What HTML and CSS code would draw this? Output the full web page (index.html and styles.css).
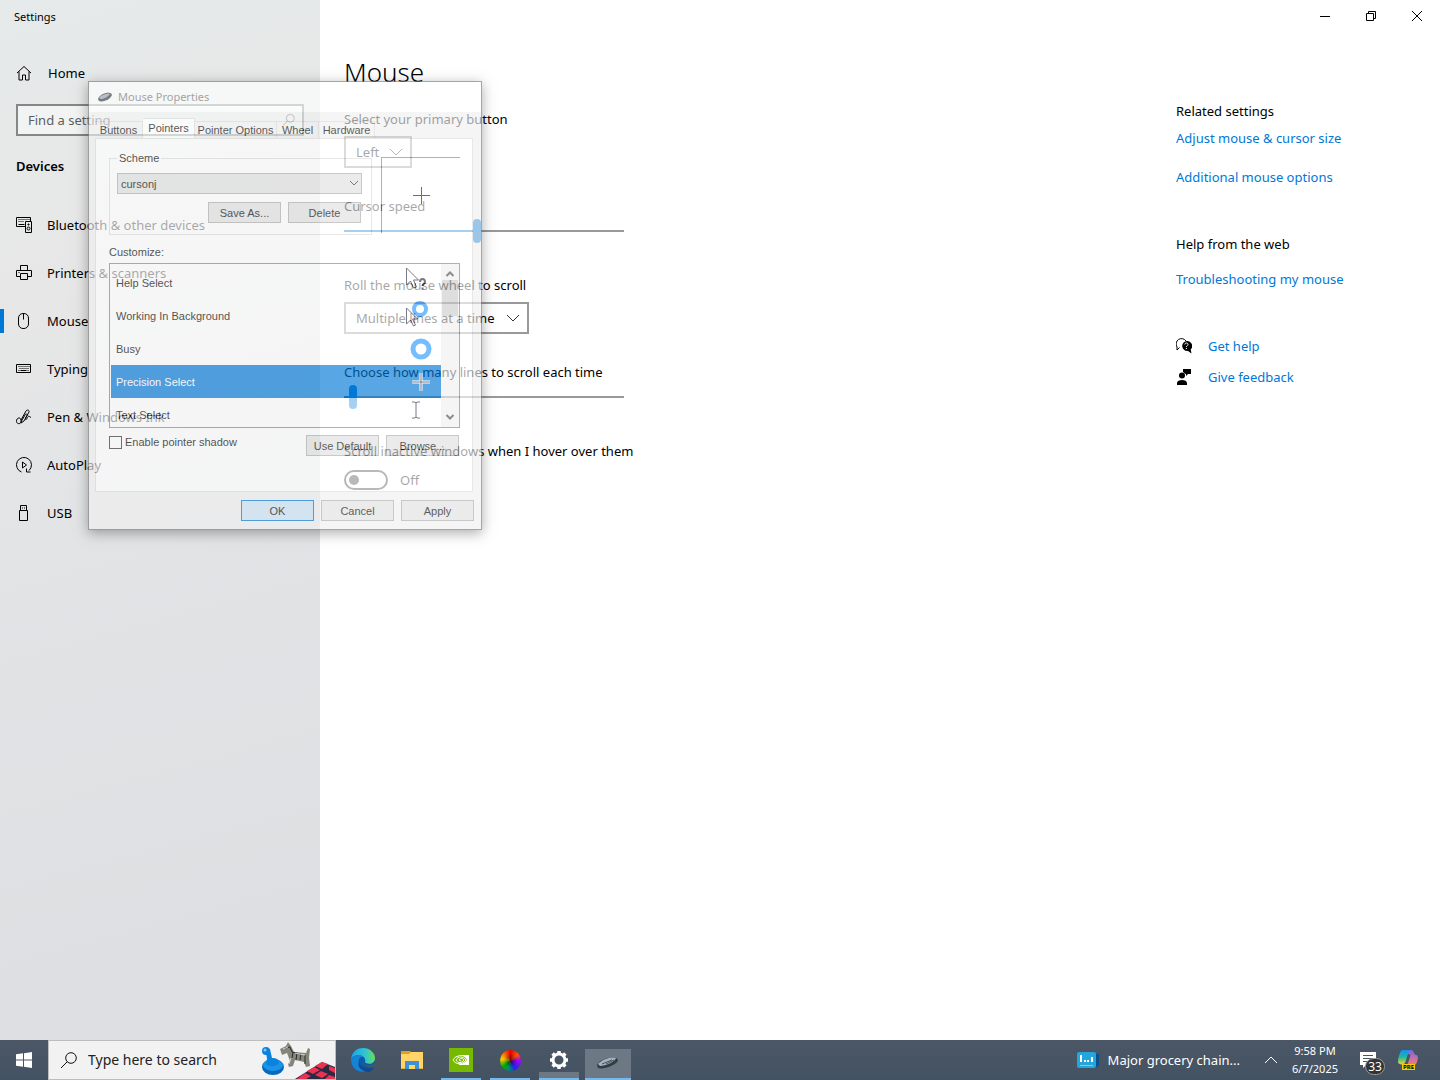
FILE: index.html
```html
<!DOCTYPE html>
<html lang="en">
<head>
    <meta charset="UTF-8">
    <meta name="viewport" content="width=device-width, initial-scale=1.0">
    <title>Settings</title>
    <link rel="stylesheet" href="styles.css">
</head>
<body>
    <div class="settings">
        <nav class="sidebar">
            <div class="app-title">Settings</div>
            <a class="nav-item home" href="#">
                <svg class="icon" viewBox="0 0 16 16"><path d="M1 8l7-6.5L15 8M3 6.500V15h3.500v-5h3v5H13V6.500"/></svg>
                Home
            </a>
            <div class="find">
                <input type="text" placeholder="Find a setting" aria-label="Find a setting">
                <svg class="icon" viewBox="0 0 16 16"><circle cx="9.500" cy="6" r="4.500"/><path d="M6.300 9.300L1 14.500"/></svg>
            </div>
            <h2>Devices</h2>
            <ul class="nav-list">
                <li><a class="nav-item" href="#">
                    <svg class="icon" viewBox="0 0 16 16"><path d="M9 9.500H.5v-9h14v4M2.500 2.500h1m1 0h1m1 0h1m1 0h1m1 0h1m1 0h1M2.500 4.500h1m1 0h1m1 0h1M2.500 7.500h6M9.500 4.500h6v11h-6z"/><circle cx="12.500" cy="11.500" r="1.500"/><path d="M12 7h1v1h-1z"/></svg>
                    Bluetooth &amp; other devices
                </a></li>
                <li><a class="nav-item" href="#">
                    <svg class="icon" viewBox="0 0 16 16"><path d="M4.500 6V.5h7V6M4 11.500H.5v-6h15v6H12M4.500 8.500h7v6h-7zM2.500 7.500h1"/></svg>
                    Printers &amp; scanners
                </a></li>
                <li><a class="nav-item active" href="#">
                    <svg class="icon" viewBox="0 0 16 16"><rect x="2.500" y=".5" width="10" height="15" rx="4.500"/><path d="M7.500 1v5.500"/></svg>
                    Mouse
                </a></li>
                <li><a class="nav-item" href="#">
                    <svg class="icon" viewBox="0 0 16 16"><path d="M.5 3.500h14v8H.5zM2.500 5.500h1m1 0h1m1 0h1m1 0h1m1 0h1m1 0h1M3.500 7.500h1m1 0h1m1 0h1m1 0h1m1 0h1M2.500 9.500h1m1 0h6m1 0h1"/></svg>
                    Typing
                </a></li>
                <li><a class="nav-item" href="#">
                    <svg class="icon" viewBox="0 0 16 16"><path d="M5 11L10 2c1-1.800 3.800-.8 3 1L8 12l-3 2zM5 11c-1-4-5-1.500-4.500 1.500.5 3 4.500 3 5-.5L9 6c1-2 2.500-1 2 .5L9.500 9c-.5 2 1 2 1.500.5s1.500-3 2.500-2l1.500 1"/></svg>
                    Pen &amp; Windows Ink
                </a></li>
                <li><a class="nav-item" href="#">
                    <svg class="icon" viewBox="0 0 16 16"><path d="M5.500 15A7.500 7.500 0 1 1 13 13.500M10.500 11.500v3.500h4M6.500 5l4 3-4 3z"/></svg>
                    AutoPlay
                </a></li>
                <li><a class="nav-item" href="#">
                    <svg class="icon" viewBox="0 0 16 16"><path d="M3.500 5.500h8v10h-8zM4.500 5V.5h6V5M6 3h1m1 0h1"/></svg>
                    USB
                </a></li>
            </ul>
        </nav>

        <main class="page">
            <div class="window-controls">
                <button type="button" aria-label="Minimize"><svg viewBox="0 0 10 10"><path d="M0 5.500h10"/></svg></button>
                <button type="button" aria-label="Restore"><svg viewBox="0 0 10 10"><path d="M.5 2.500h7v7h-7zM2.500 2V.5h7v7H8"/></svg></button>
                <button type="button" aria-label="Close"><svg viewBox="0 0 10 10"><path d="M0 0l10 10M10 0L0 10"/></svg></button>
            </div>
            <div class="columns">
                <section class="content">
                    <h1>Mouse</h1>
                    <div class="field">
                        <label for="primary">Select your primary button</label>
                        <div class="dropdown">
                            <select id="primary"><option>Left</option><option>Right</option></select>
                            <svg viewBox="0 0 12 12"><path d="M0 3l6 6 6-6"/></svg>
                        </div>
                    </div>
                    <div class="field">
                        <label for="speed">Cursor speed</label>
                        <input class="slider speed" type="range" id="speed" min="1" max="20" value="10">
                    </div>
                    <div class="field">
                        <label for="wheel">Roll the mouse wheel to scroll</label>
                        <div class="dropdown wide">
                            <select id="wheel"><option>Multiple lines at a time</option><option>One screen at a time</option></select>
                            <svg viewBox="0 0 12 12"><path d="M0 3l6 6 6-6"/></svg>
                        </div>
                    </div>
                    <div class="field">
                        <label for="lines">Choose how many lines to scroll each time</label>
                        <input class="slider lines" type="range" id="lines" min="1" max="100" value="3">
                    </div>
                    <div class="field">
                        <label for="inactive">Scroll inactive windows when I hover over them</label>
                        <div class="toggle-row">
                            <input class="toggle" type="checkbox" role="switch" id="inactive">
                            <span>Off</span>
                        </div>
                    </div>
                </section>

                <aside class="related">
                    <h3>Related settings</h3>
                    <a href="#">Adjust mouse &amp; cursor size</a>
                    <a href="#" class="spaced">Additional mouse options</a>
                    <h3 class="web">Help from the web</h3>
                    <a href="#" class="trouble">Troubleshooting my mouse</a>
                    <a href="#" class="support">
                        <svg viewBox="0 0 16 16"><path d="M3.500 9.500L1 12V9A5 5 0 1 1 10 3" fill="none" stroke="#000"/><path d="M10.500 3a5 5 0 1 0 1.500 10l3.500 2.500-.8-4A5 5 0 0 0 10.500 3z"/><path d="M8.800 6.500c0-2 3.200-2 3.200 0 0 1.200-1.600 1.200-1.600 2.500M10.400 10v1" fill="none" stroke="#fff"/></svg>
                        Get help
                    </a>
                    <a href="#" class="support">
                        <svg viewBox="0 0 16 16"><circle cx="6" cy="6.500" r="3"/><path d="M1 16v-2c0-4 10-4 10 0v2zM7 0h8v5h-3l-2 2V5H9.500L7 3z"/></svg>
                        Give feedback
                    </a>
                </aside>
            </div>
        </main>
    </div>

    <form class="dialog">
        <div class="dialog-title">
            <svg viewBox="0 0 14 10"><path d="M0 7C1 3 8 0 12 1c3 1 2 3 0 5-3 3-9 4-11 3z" fill="#3b4248"/><path d="M1 6c2-3 8-5 11-4-2 3-7 5-9 5z" fill="#9caab8"/></svg>
            Mouse Properties
        </div>
        <div class="tabs">
            <button type="button" class="tab-buttons">Buttons</button>
            <button type="button" class="tab-pointers selected">Pointers</button>
            <button type="button" class="tab-options">Pointer Options</button>
            <button type="button" class="tab-wheel">Wheel</button>
            <button type="button" class="tab-hardware">Hardware</button>
        </div>
        <div class="panel">
            <div class="scheme-row">
                <fieldset class="scheme">
                    <legend>Scheme</legend>
                    <div class="dropdown small">
                        <select aria-label="Scheme"><option>cursonj</option></select>
                        <svg viewBox="0 0 12 12"><path d="M2 4l4 4 4-4"/></svg>
                    </div>
                    <div class="buttons">
                        <button type="button">Save As...</button>
                        <button type="button">Delete</button>
                    </div>
                </fieldset>
                <div class="preview">
                    <svg viewBox="0 0 17 17"><path d="M8.500 0v17M0 8.500h17"/></svg>
                </div>
            </div>
            <div class="list-label" id="customize">Customize:</div>
            <div class="list">
                <ul role="listbox" aria-labelledby="customize">
                    <li role="option">Help Select
                        <svg class="cursor" viewBox="0 0 32 32"><path d="M6.500 1v17l4-4 3 7 3-1-3-7h5z"/><path d="M20 15c0-4 5-4 5 0 0 2-2.500 2-2.500 4m0 1.500v2" stroke-width="2"/></svg>
                    </li>
                    <li role="option">Working In Background
                        <svg class="cursor" viewBox="0 0 32 32"><path d="M6.500 8v16l4-4 3 6 2-1-3-6h5z"/><circle class="ring" cx="20" cy="9" r="6" stroke-width="4"/></svg>
                    </li>
                    <li role="option">Busy
                        <svg class="cursor" viewBox="0 0 32 32"><circle class="ring" cx="21" cy="16" r="8" stroke-width="5"/></svg>
                    </li>
                    <li role="option" class="selected" aria-selected="true">Precision Select
                        <svg class="cursor" viewBox="0 0 32 32"><path d="M21 7v18M12 16h18" stroke="#fff" stroke-width="3"/><path d="M21 7v18M12 16h18"/></svg>
                    </li>
                    <li role="option">Text Select
                        <svg class="cursor" viewBox="0 0 32 32"><path d="M12 3h3l1 1 1-1h3M16 4v14M12 19h3l1-1 1 1h3"/></svg>
                    </li>
                </ul>
                <div class="scrollbar">
                    <svg viewBox="0 0 12 12"><path d="M2.500 8L6 4.500 9.500 8"/></svg>
                    <div class="scroll-thumb"></div>
                    <svg viewBox="0 0 12 12"><path d="M2.500 4L6 7.500 9.500 4"/></svg>
                </div>
            </div>
            <div class="options">
                <label><input type="checkbox"> Enable pointer shadow</label>
                <div class="buttons">
                    <button type="button">Use Default</button>
                    <button type="button">Browse...</button>
                </div>
            </div>
        </div>
        <div class="dialog-footer buttons">
            <button type="button" class="primary">OK</button>
            <button type="button">Cancel</button>
            <button type="button">Apply</button>
        </div>
    </form>

    <footer class="taskbar">
        <button type="button" class="start" aria-label="Start">
            <svg viewBox="0 0 16 16"><path d="M0 2.300l7-1v6.200H0zM8 1.200L16 0v7.500H8zM0 8.500h7v6.200l-7-1zM8 8.500h8V16l-8-1.200z" fill="#fff"/></svg>
        </button>
        <div class="search">
            <svg class="search-icon" viewBox="0 0 16 16"><circle cx="10" cy="6" r="5.300"/><path d="M6.300 9.700L0 16"/></svg>
            <input type="text" placeholder="Type here to search" aria-label="Type here to search">
            <!-- game pieces on a checkered board -->
            <svg class="art" viewBox="0 0 74 38">
                <ellipse cx="12" cy="26" rx="11" ry="8" fill="#0669bd"/>
                <ellipse cx="12" cy="24" rx="10" ry="6" fill="#1994e8"/>
                <path d="M3 9l6-1 2 9c5 0 7 2 7 5-3 4-10 4-13 1 2-4 1-9-2-14z" fill="#0b83dc"/>
                <circle cx="5" cy="10" r="4" fill="#0b83dc"/><circle cx="4" cy="9" r="1.500" fill="#7dc8ff"/>
                <path d="M19 8l6-3 2-4 3 4 3 6 12 1 2-5 2 1-1 9 1 8-4 1-2-5-9-2-2 6-4 1-1-3 2-3-3-8-5 2z" fill="#84867c"/>
                <path d="M24 7l5-1 2 5 9 2M32 11l-1 6m5-5l-1 7m5-6l-1 6m5-5v9" stroke="#282c29" fill="none"/>
                <path d="M22 8l5-2M30 17l-2 6M34 12l10 2" stroke="#d4d4c8" fill="none"/>
                <path d="M34 38l27-17 13 5v12z" fill="#272b43"/>
                <path d="M61 21l6 2-6 5-7-3zM53 26l6 3-7 4-6-3zM68 25l6 2v5l-6-3zM60 30l7 3-6 4-7-3zM44 32l6 3-5 3H36zM68 34l6 2v2h-10z" fill="#ed3150"/>
            </svg>
        </div>
        <div class="apps">
            <button type="button" aria-label="Edge">
                <svg viewBox="0 0 24 24">
                    <defs>
                        <linearGradient id="edge-top" x1="0" x2="1"><stop offset="0" stop-color="#1ba3e8"/><stop offset=".6" stop-color="#32c5cf"/><stop offset="1" stop-color="#67df58"/></linearGradient>
                    </defs>
                    <circle cx="12" cy="12" r="12" fill="#0b5cad"/>
                    <path d="M0 11C1 3 7 0 12 0c7 0 12 5 12 10 0 5-5 7-9 5-2-1 0-2-1-4-2-5-11-5-14 0z" fill="url(#edge-top)"/>
                    <path d="M0 11c3-5 10-5 13-2-4-1-6 2-5 6 1 5 6 8 11 6-7 6-19 2-19-10z" fill="#1584d4"/>
                    <path d="M9 12c-2 6 5 10 13 6l2 1-5 5C9 24 5 17 9 12z" fill="#124b91"/>
                    <path d="M13 13c-1 4 5 6 10 3h1v3c-5 2-13 0-11-6z" fill="#475665"/>
                </svg>
            </button>
            <button type="button" aria-label="File Explorer">
                <svg viewBox="0 0 24 24"><path d="M1 3h9l2 2h11v4H1z" fill="#e1a11a"/><path d="M1 6h8l2-2h12v17H1z" fill="#ffd568"/><path d="M5 21v-8h14v8h-4v-4H9v4z" fill="#3d91d7"/><path d="M1 20h4v1H1zM19 20h4v1h-4z" fill="#e7ae3b"/></svg>
            </button>
            <button type="button" class="running" aria-label="NVIDIA">
                <svg viewBox="0 0 24 24"><path d="M0 0h24v24H0z" fill="#76b900"/><path d="M10 7h10v10H10z" fill="#fff"/><path d="M10 8c4-1 7 2 8 4-3 4-8 5-11 3-2-1-3-3-3-3s2-4 6-4z" fill="#76b900"/><path d="M10 8C7 8 5 10 4 12c3 5 9 5 13 0-3-4-8-4-10 0 2 4 6 3 8 0-2-2-4-2-5 0l2 1" fill="none" stroke="#fff"/></svg>
            </button>
            <button type="button" class="running" aria-label="Color tool">
                <span class="color-wheel"></span>
            </button>
            <button type="button" class="running grouped" aria-label="Settings">
                <svg viewBox="0 0 24 24"><circle cx="12" cy="12" r="6" fill="none" stroke="#fff" stroke-width="3"/><path d="M12 3v3M12 18v3M3 12h3M18 12h3M5.600 5.600l2 2M16.400 16.400l2 2M5.600 18.400l2-2M16.400 7.600l2-2" stroke="#fff" stroke-width="3.500"/></svg>
            </button>
            <button type="button" class="running current" aria-label="Mouse Properties">
                <svg viewBox="0 0 24 24"><path d="M1 15C3 10 14 6 20 8c4 2 1 5-3 7-5 3-12 4-15 3z" fill="#343b41"/><path d="M2 14c3-4 13-8 18-6-1 4-11 8-16 8z" fill="#a3b2c0"/><path d="M6 14l10-4M10 14l8-4" stroke="#46515b"/></svg>
            </button>
        </div>
        <div class="tray">
            <button type="button" class="news">
                <svg viewBox="0 0 22 18"><path d="M5 3h17v11l-3 3H5z" fill="#0b4f91"/><rect y="1" width="19" height="16" rx="2" fill="#25a5d9"/><path d="M3 14.500h13" stroke="#5be0ef"/><path d="M4 4v7M8 9v2M11 9v2M15 6v5" stroke="#fff" stroke-width="2"/></svg>
                Major grocery chain...
            </button>
            <button type="button" class="chevron" aria-label="Show hidden icons"><svg viewBox="0 0 12 8"><path d="M0 7l6-6 6 6"/></svg></button>
            <button type="button" class="clock"><span>9:58 PM</span><span>6/7/2025</span></button>
            <button type="button" class="notifications" aria-label="Notifications">
                <svg viewBox="0 0 16 16"><path d="M0 0h16v13H6l-3 3v-3H0z" fill="#fff"/><path d="M3 3.500h10M3 6.500h10M3 9.500h6" stroke="#475563"/></svg>
                <span class="badge">33</span>
            </button>
            <button type="button" class="copilot" aria-label="Copilot">
                <svg viewBox="0 0 22 22">
                    <defs><linearGradient id="co-left" x2="0" y2="1"><stop offset="0" stop-color="#168ff0"/><stop offset=".5" stop-color="#22b99b"/><stop offset="1" stop-color="#f0d038"/></linearGradient>
                    <linearGradient id="co-right" x2="0" y2="1"><stop offset="0" stop-color="#7d63ed"/><stop offset="1" stop-color="#ff7f67"/></linearGradient></defs>
                    <path d="M5 1h10l-4 4-3 9c-1 2-7 2-7-1C1 9 3 2 5 1z" fill="url(#co-left)"/>
                    <path d="M14 1c3 0 3 5 5 5 3 0 2 6 0 9-2 2-5 2-9 2l3-9c1-2 0-3-2-3 1-2 1-4 3-4z" fill="url(#co-right)"/>
                </svg>
                <span class="pre">PRE</span>
            </button>
        </div>
    </footer>
</body>
</html>
```
FILE: styles.css
```css
:root {
    --accent: #0078d7;
    --ui-font: "Segoe UI", "Noto Sans", "Open Sans", sans-serif;
    --dialog-font: "Liberation Sans", Arial, sans-serif;
}

* {
    box-sizing: border-box;
}

body {
    margin: 0;
    height: 100vh;
    display: flex;
    flex-direction: column;
    position: relative;
    overflow: hidden;
    font-family: var(--ui-font);
    font-size: 13px;
    line-height: 20px;
    color: #000;
    background: #fff;
}

button, input, select {
    font: inherit;
    color: inherit;
    margin: 0;
}

button {
    padding: 0;
    border: none;
    background: none;
}

a {
    color: var(--accent);
    text-decoration: none;
}

h1, h2, h3, ul {
    margin: 0;
    padding: 0;
}

ul {
    list-style: none;
}

svg {
    flex: none;
    fill: none;
}

.settings {
    flex: 1;
    display: flex;
    min-height: 0;
}

/* Sidebar */
.sidebar {
    width: 320px;
    background: linear-gradient(165deg, #e6eaea 0%, #e7e7e7 25%, #e1e3e5 55%, #dddee1 100%);
}

.app-title {
    padding-left: 14px;
    font-size: 11px;
    line-height: 34px;
}

.nav-item {
    display: flex;
    align-items: center;
    gap: 15px;
    height: 48px;
    padding-left: 16px;
    color: #000;
}

.home {
    margin-top: 15px;
    gap: 16px;
}

.icon {
    width: 16px;
    height: 16px;
    stroke: #000;
    stroke-width: 1;
}

.nav-item.active {
    box-shadow: inset 4px 0 var(--accent);
    height: 24px;
    margin: 12px 0;
}

.find {
    display: flex;
    align-items: center;
    height: 32px;
    margin: 7px 16px 0;
    padding: 0 6px 0 10px;
    border: 2px solid #848787;
    background: #f2f4f4;
}

.find input {
    flex: 1;
    min-width: 0;
    padding: 0;
    border: none;
    background: none;
}

.find input::placeholder {
    color: #5d5f5f;
}

.find .icon {
    width: 14px;
    height: 14px;
    stroke: #555;
}

.sidebar h2 {
    margin: 14px 16px 19px;
    font-size: 13px;
    font-weight: 600;
    line-height: 32px;
}

/* Page */
.page {
    flex: 1;
    display: flex;
    flex-direction: column;
}

.window-controls {
    display: flex;
    justify-content: flex-end;
}

.window-controls button {
    width: 46px;
    height: 32px;
}

.window-controls svg {
    width: 10px;
    height: 10px;
    stroke: #000;
}

.columns {
    display: flex;
    justify-content: space-between;
    padding: 20px 24px;
}

.content h1 {
    margin-bottom: 17px;
    font-size: 26px;
    font-weight: 300;
    line-height: 40px;
}

.field {
    display: flex;
    flex-direction: column;
    align-items: flex-start;
    margin-bottom: 28px;
}

.field label {
    margin-bottom: 7px;
}

.dropdown {
    position: relative;
    width: 68px;
}

.dropdown.wide {
    width: 185px;
}

.dropdown select {
    display: block;
    appearance: none;
    width: 100%;
    height: 32px;
    padding: 0 10px;
    border: 2px solid #999;
    border-radius: 0;
    background: transparent;
}

.dropdown svg {
    position: absolute;
    right: 10px;
    top: 10px;
    width: 12px;
    height: 12px;
    stroke: #333;
    pointer-events: none;
}

.slider {
    appearance: none;
    width: 280px;
    height: 24px;
    margin: -4px 0 4px;
    background: linear-gradient(#999, #999) center / 100% 2px no-repeat;
}

.slider.speed {
    background: linear-gradient(90deg, var(--accent) 47%, #999 47%) center / 100% 2px no-repeat;
}

.slider.lines {
    background: linear-gradient(90deg, var(--accent) 2%, #999 2%) center / 100% 2px no-repeat;
}

.slider::-webkit-slider-thumb {
    appearance: none;
    width: 8px;
    height: 24px;
    border-radius: 4px;
    background: var(--accent);
}

.toggle-row {
    display: flex;
    align-items: center;
    gap: 12px;
    margin-top: 2px;
}

.toggle {
    appearance: none;
    width: 44px;
    height: 20px;
    padding: 3px;
    border: 2px solid #333;
    border-radius: 10px;
}

.toggle::before {
    content: "";
    display: block;
    width: 10px;
    height: 10px;
    border-radius: 50%;
    background: #333;
}

.related {
    width: 240px;
    padding-top: 49px;
    display: flex;
    flex-direction: column;
    align-items: flex-start;
}

.related h3 {
    font-size: 13px;
    font-weight: 400;
    margin-bottom: 7px;
}

.related .spaced {
    margin-top: 19px;
}

.related .web {
    margin: 47px 0 15px;
}

.related .trouble {
    margin-bottom: 41px;
}

.support {
    display: flex;
    align-items: center;
    gap: 16px;
    height: 31px;
}

.support svg {
    width: 16px;
    height: 16px;
    fill: #000;
}

/* Fading mouse properties window */
.dialog {
    position: absolute;
    left: 88px;
    top: 81px;
    width: 394px;
    padding: 0 7px 8px 6px;
    border: 1px solid #777;
    background: #f0f0f0;
    box-shadow: 0 3px 12px rgba(0, 0, 0, 0.5);
    opacity: 0.65;
    font-family: var(--dialog-font);
    font-size: 11px;
    line-height: 16px;
}

.dialog-title {
    display: flex;
    align-items: center;
    gap: 6px;
    height: 30px;
    margin: 0 -7px 0 -6px;
    padding-left: 9px;
    background: #fff;
    color: #808080;
    font-family: var(--ui-font);
}

.dialog-title svg {
    width: 14px;
    height: 10px;
}

.tabs {
    display: flex;
    align-items: flex-end;
    height: 26px;
    padding-top: 6px;
}

.tabs button {
    height: 17px;
    border: 1px solid #d9d9d9;
    border-width: 1px 1px 0 0;
}

.tabs .selected {
    height: 20px;
    padding-bottom: 2px;
    background: #fff;
}

.tab-buttons {
    width: 48px;
}

.tab-pointers {
    width: 52px;
}

.tab-options {
    width: 82px;
}

.tab-wheel {
    width: 42px;
}

.tab-hardware {
    width: 56px;
}

.panel {
    height: 354px;
    padding: 11px 12px 0 13px;
    border: 1px solid #dcdcdc;
    background: #fff;
    margin-right: 1px;
}

.scheme-row {
    display: flex;
    gap: 9px;
    height: 85px;
}

.scheme {
    width: 263px;
    height: 85px;
    margin: 0;
    padding: 7px 9px 0 7px;
    border: 1px solid #dcdcdc;
}

.scheme legend {
    padding: 0 2px;
    line-height: 16px;
}

.scheme .buttons {
    padding-right: 1px;
}

.dropdown.small {
    width: auto;
    margin-bottom: 8px;
}

.dropdown.small select {
    height: 21px;
    padding: 0 3px;
    border: 1px solid #adadad;
    background: #e1e1e1;
}

.dropdown.small svg {
    right: 2px;
    top: 4px;
}

.buttons {
    display: flex;
    justify-content: flex-end;
    gap: 7px;
}

.buttons button {
    width: 73px;
    height: 21px;
    border: 1px solid #adadad;
    background: #e1e1e1;
}

.preview {
    display: flex;
    justify-content: center;
    align-items: center;
    flex: 1;
    height: 76px;
    margin: 7px 0 0;
    border: 1px solid #888;
    border-width: 1px 0 0 1px;
}

.preview svg {
    width: 17px;
    height: 17px;
    stroke: #222;
}

.list-label {
    margin: 9px 0 3px;
}

.list {
    display: flex;
    height: 165px;
    border: 1px solid #828790;
    overflow: hidden;
}

.list ul {
    flex: 1;
    padding: 2px 0 0 1px;
}

.list li {
    display: flex;
    align-items: center;
    justify-content: space-between;
    height: 33px;
    padding: 0 9px 0 5px;
}

.list li.selected {
    background: var(--accent);
    color: #fff;
}

.cursor {
    width: 32px;
    height: 32px;
    stroke: #334;
}

.cursor .ring {
    stroke: #2a9bff;
}

.scrollbar {
    display: flex;
    flex-direction: column;
    align-items: center;
    width: 18px;
    padding: 4px 0;
    background: #f0f0f0;
}

.scrollbar svg {
    width: 12px;
    height: 12px;
    stroke: #505050;
    stroke-width: 2;
}

.scroll-thumb {
    width: 16px;
    height: 36px;
    margin-bottom: auto;
    background: #cdcdcd;
}

.options {
    display: flex;
    justify-content: space-between;
    padding: 7px 1px 0 0;
}

.options label {
    display: flex;
    align-items: center;
    gap: 3px;
    height: 14px;
}

.options input {
    appearance: none;
    width: 13px;
    height: 13px;
    border: 1px solid #333;
}

.dialog-footer {
    padding-top: 8px;
}

.dialog-footer .primary {
    border-color: var(--accent);
    background: #cce4f7;
}

/* Taskbar */
.taskbar {
    display: flex;
    height: 40px;
    background: linear-gradient(#4b5766, #435262);
    color: #fff;
}

.start {
    display: flex;
    align-items: center;
    justify-content: center;
    width: 48px;
}

.start svg {
    width: 16px;
    height: 16px;
}

.search {
    display: flex;
    align-items: center;
    width: 288px;
    padding-left: 12px;
    border: 1px solid #bdbdbd;
    background: #f2f2f2;
    color: #1b1b1b;
    font-size: 14px;
}

.search-icon {
    width: 16px;
    height: 16px;
    stroke: #111;
}

.search input {
    flex: 1;
    min-width: 0;
    padding: 0;
    margin-left: 11px;
    border: none;
    background: none;
}

.search input::placeholder {
    color: #222;
}

.art {
    width: 74px;
    height: 38px;
}

.apps {
    display: flex;
    gap: 1px;
    margin-left: 3px;
}

.apps button {
    display: flex;
    justify-content: center;
    align-items: center;
    width: 48px;
    padding: 0 4px;
}

.apps svg {
    width: 24px;
    height: 24px;
}

.apps .running {
    background: linear-gradient(#76b9ed, #76b9ed) center bottom / 40px 2px no-repeat;
}

.apps .grouped {
    background: linear-gradient(transparent 80%, #6d7885 80% 95%, #76b9ed 95%) center / 40px 100% no-repeat;
}

.apps .current {
    background: linear-gradient(transparent 22%, #6d7885 22% 95%, #76b9ed 95%) center / 46px 100% no-repeat;
    padding-top: 4px;
}

.color-wheel {
    width: 21px;
    height: 21px;
    border-radius: 50%;
    background: radial-gradient(#0008, transparent 50%), conic-gradient(#e00, #f50 50deg, #a0f 90deg, #22e 150deg, #087 190deg, #0a0 230deg, #fc0 280deg, #e00);
}

.tray {
    display: flex;
    margin-left: auto;
    padding-right: 16px;
}

.tray button {
    display: flex;
    align-items: center;
    justify-content: center;
}

.tray .news {
    gap: 9px;
    padding: 0 16px 0 8px;
}

.news svg {
    width: 22px;
    height: 18px;
}

.tray .chevron {
    width: 30px;
}

.chevron svg {
    width: 12px;
    height: 8px;
    stroke: #fff;
}

.tray .clock {
    flex-direction: column;
    width: 58px;
    font-size: 11px;
    line-height: 18px;
}

.notifications {
    position: relative;
    width: 48px;
}

.notifications svg {
    width: 16px;
    height: 16px;
}

.badge {
    position: absolute;
    left: 21px;
    top: 18px;
    width: 20px;
    height: 17px;
    border: 1px solid #999;
    border-radius: 9px;
    background: #333;
    font-size: 12px;
    line-height: 15px;
}

.copilot {
    position: relative;
    width: 32px;
}

.copilot svg {
    width: 22px;
    height: 22px;
}

.pre {
    position: absolute;
    left: 10px;
    top: 24px;
    padding: 0 1px;
    background: #ffc800;
    color: #000;
    font-size: 6px;
    font-weight: 700;
    line-height: 6px;
}
```
